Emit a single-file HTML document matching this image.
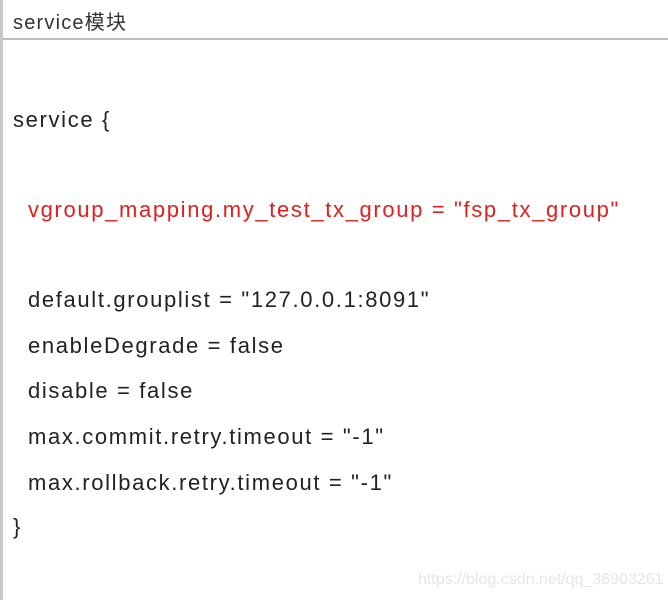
<!DOCTYPE html>
<html><head><meta charset="utf-8"><style>
html,body{margin:0;padding:0;background:#fff;width:668px;height:600px;overflow:hidden;position:relative;font-family:"Liberation Sans","Noto Sans CJK SC",sans-serif;}
.lb{position:absolute;left:0;top:0;width:3px;height:600px;background:#c8c8c8;}
.hd{position:absolute;left:13px;top:6px;font-size:20px;letter-spacing:1.2px;color:#333;}
.hl{position:absolute;left:3px;top:38px;width:665px;height:2px;background:#bdbdbd;}
.t{position:absolute;font-size:22px;letter-spacing:1.65px;color:#222;white-space:pre;line-height:26px;}
.r{color:#e02020;}
.wm{position:absolute;left:418px;top:571px;font-size:16px;color:#e6e6e6;}
</style></head><body>
<div class="lb"></div>
<div class="hd">service模块</div>
<div class="hl"></div>
<div class="t" style="left:13px;top:107px">service {</div>
<div class="t r" style="left:28px;top:197px">vgroup_mapping.my_test_tx_group = "fsp_tx_group"</div>
<div class="t" style="left:28px;top:287px">default.grouplist = "127.0.0.1:8091"</div>
<div class="t" style="left:28px;top:333px">enableDegrade = false</div>
<div class="t" style="left:28px;top:378px">disable = false</div>
<div class="t" style="left:28px;top:424px">max.commit.retry.timeout = "-1"</div>
<div class="t" style="left:28px;top:470px">max.rollback.retry.timeout = "-1"</div>
<div class="t" style="left:13px;top:514px">}</div>
<div class="wm">https://blog.csdn.net/qq_36903261</div>
</body></html>
